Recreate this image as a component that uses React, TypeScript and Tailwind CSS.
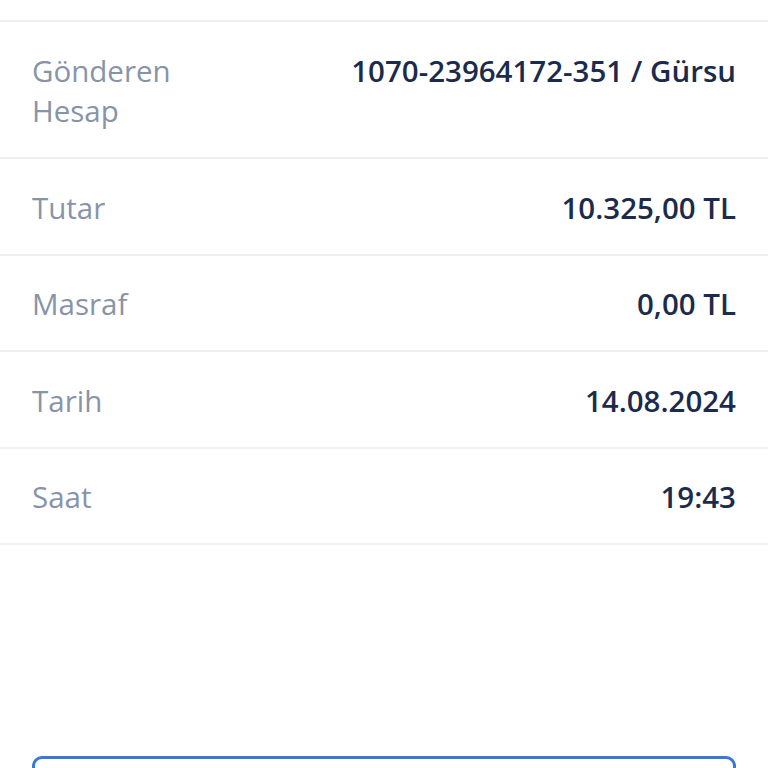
const rows: { label: string; value: string }[] = [
  { label: "Gönderen Hesap", value: "1070-23964172-351 / Gürsu" },
  { label: "Tutar", value: "10.325,00 TL" },
  { label: "Masraf", value: "0,00 TL" },
  { label: "Tarih", value: "14.08.2024" },
  { label: "Saat", value: "19:43" },
];

export default function App() {
  return (
    <div className="h-[768px] w-[768px] overflow-hidden bg-white font-['Open_Sans',sans-serif]">
      <div className="h-[20px]" />
      <div className="border-t-2 border-[#eef0f4]">
        {rows.map((row) => (
          <div
            key={row.label}
            className="flex items-start justify-between gap-4 border-b-2 border-[#eef0f4] px-8 pt-[28.5px] pb-[25.5px]"
          >
            <div className="w-[175px] shrink-0 text-[29.5px] leading-[40.5px] text-[#8794a8]">{row.label}</div>
            <div className="text-right text-[29.5px] font-semibold leading-[40.5px] text-[#1b2b4b]">{row.value}</div>
          </div>
        ))}
      </div>
      <div className="px-8 pt-[211px]">
        <button
          type="button"
          className="h-[64px] w-full rounded-[10px] border-[3px] border-[#3a78d4] bg-white"
        />
      </div>
    </div>
  );
}
